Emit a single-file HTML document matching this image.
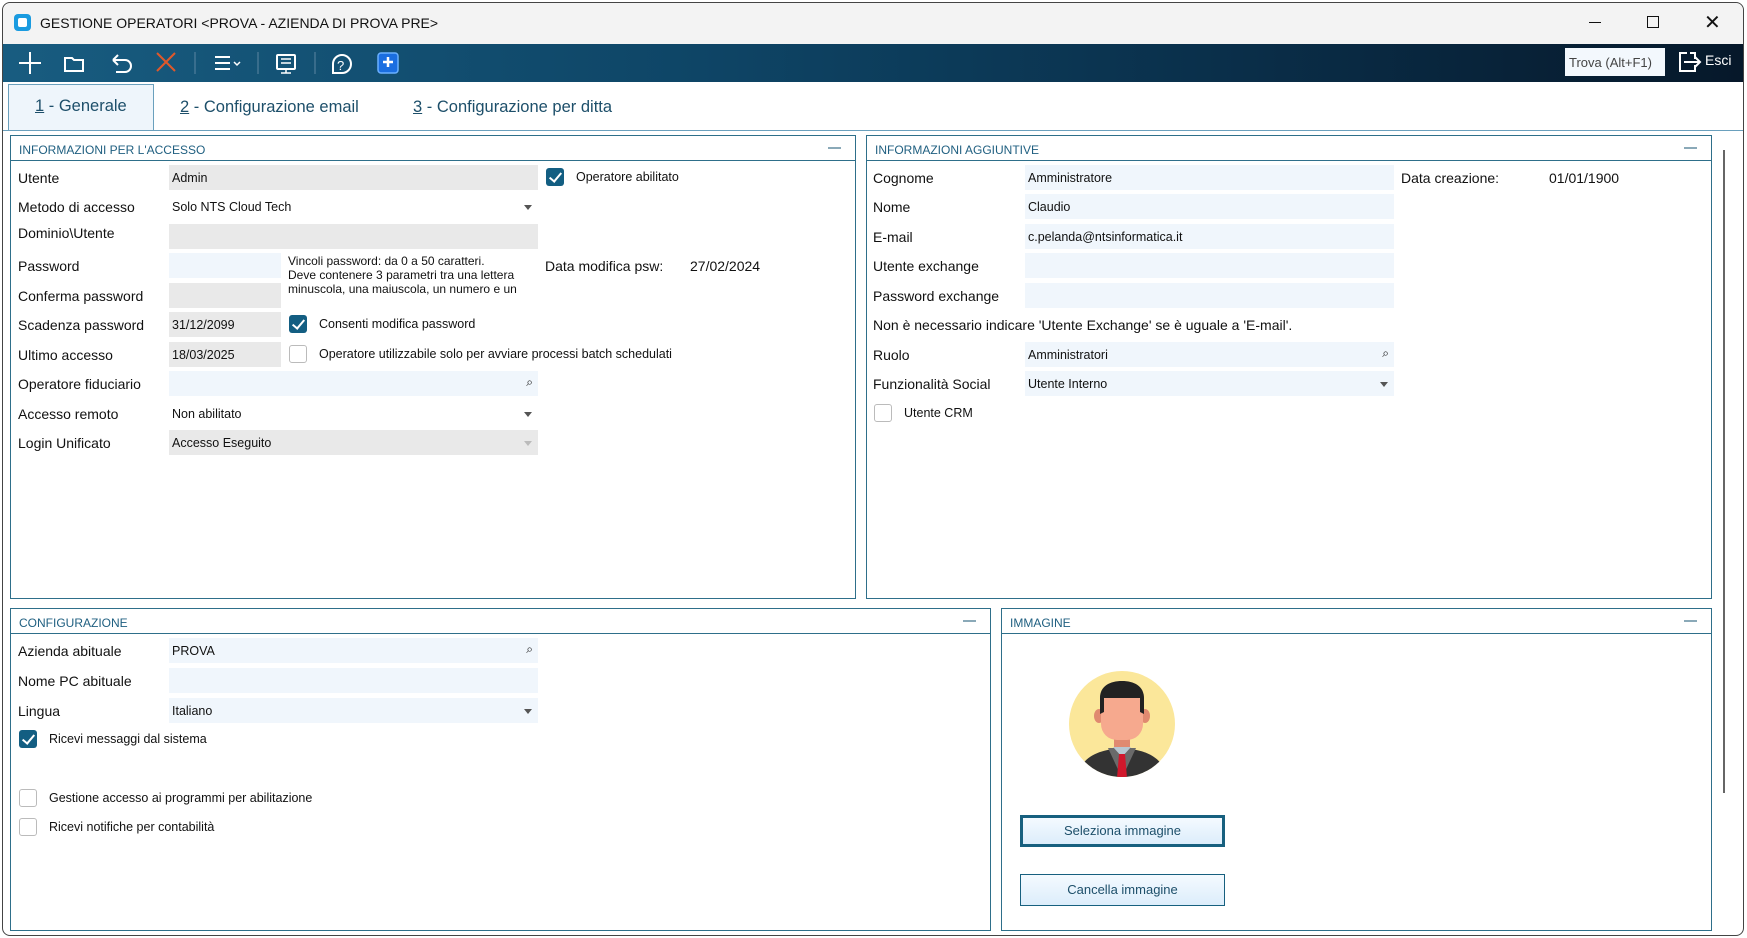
<!DOCTYPE html>
<html><head><meta charset="utf-8"><style>
*{margin:0;padding:0;box-sizing:border-box}
body{width:1747px;height:938px;background:#fff;font-family:"Liberation Sans",sans-serif;position:relative;overflow:hidden;color:#111}
.a{position:absolute;white-space:nowrap}
.lbl{font-size:14px;color:#111}
.in{position:absolute;height:25px;font-size:12.5px;padding:6px 3px;color:#111}
.g{background:#e9e9e9}.b{background:#f0f6fc}
.panel{position:absolute;border:1px solid #2e6f8a}
.ph{position:absolute;left:0;right:0;top:0;height:25px;border-bottom:1px solid #2e6f8a;font-size:12px;color:#1f5f80;padding:7px 8px}
.ph i{position:absolute;right:14px;top:11px;width:13px;height:2px;background:#8aa9b8}
.cb{position:absolute;width:18px;height:18px;border-radius:3px}
.cb.on{background:#135e82}
.cb.on:after{content:"";position:absolute;left:6px;top:2px;width:5px;height:10px;border:solid #fff;border-width:0 2px 2px 0;transform:rotate(40deg)}
.cb.off{border:1px solid #bbb;background:#fff}
.dd:after{content:"";position:absolute;right:6px;top:11px;border:4px solid transparent;border-top:5px solid #555}
.dd.lt:after{border-top-color:#bbb}
.btn{position:absolute;width:205px;height:32px;background:linear-gradient(#f4faff,#dcedfb);border:1px solid #17607f;font-size:13px;color:#1d4f6a;text-align:center;line-height:30px}
</style></head><body>
<div class="a" style="left:2px;top:2px;width:1742px;height:934px;border:1px solid #444;border-radius:8px"></div>
<div class="a" style="left:3px;top:3px;width:1740px;height:42px;background:#f3f3f3;border-radius:8px 8px 0 0"></div>
<div class="a" style="left:14px;top:14px;width:17px;height:17px;background:#1a9be0;border-radius:4px"><div style="position:absolute;left:4px;top:4px;width:9px;height:9px;background:#fff;border-radius:2px"></div></div>
<div class="a" style="left:40px;top:15px;font-size:14px;color:#111">GESTIONE OPERATORI &lt;PROVA - AZIENDA DI PROVA PRE&gt;</div>
<div class="a" style="left:1589px;top:22px;width:12px;height:1px;background:#111"></div>
<div class="a" style="left:1647px;top:16px;width:12px;height:12px;border:1px solid #111"></div>
<div class="a" style="left:1704px;top:10px;font-size:20px;color:#111">✕</div>
<div class="a" style="left:3px;top:44px;width:1740px;height:38px;background:linear-gradient(90deg,#185c80,#0e4566 40%,#0a2f4a 70%,#06182a)"></div>
<svg class="a" style="left:3px;top:44px" width="420" height="38" fill="none" stroke="#fff" stroke-width="2">
<path d="M27 8v22M16 19h22"/>
<path d="M62 14h7l2 2h9v11H62z"/>
<path d="M110 16h12a6 6 0 010 12h-9M110 16l5-5M110 16l5 5"/>
<path d="M154 9l18 18M172 9l-18 18" stroke="#e0582a"/>
<path d="M192 8v22" stroke="#5c87a2" stroke-width="1"/>
<path d="M212 13h15M212 19h15M212 25h15"/><path d="M231 18l3 3 3-3" stroke-width="1.5"/>
<path d="M255 8v22" stroke="#5c87a2" stroke-width="1"/>
<rect x="274" y="11" width="18" height="14" rx="1"/><path d="M278 15h10M278 19h10M283 25v4M278 29h10" stroke-width="1.5"/>
<path d="M312 8v22" stroke="#5c87a2" stroke-width="1"/>
<path d="M330 29v-9a9 9 0 1118 0 9 9 0 01-9 9z"/><text x="334" y="26" fill="#fff" stroke="none" font-size="13" font-family="Liberation Sans">?</text>
<rect x="375" y="9" width="20" height="20" rx="3" fill="#1a6ee0" stroke="#6ab0ff" stroke-width="1.5"/><path d="M385 13v10M380 18h10" stroke-width="2.5"/>
</svg>
<div class="a" style="left:1565px;top:48px;width:100px;height:28px;background:#f3f8fd;font-size:13px;color:#444;padding:7px 4px">Trova (Alt+F1)</div>
<svg class="a" style="left:1677px;top:48px" width="26" height="28" fill="none" stroke="#fff" stroke-width="2"><path d="M10 5H3v18h15v-6M18 11V5h-5"/><path d="M7 14h16M18 9l5 5-5 5"/></svg>
<div class="a" style="left:1705px;top:52px;font-size:14px;color:#fff">Esci</div>
<div class="a" style="left:8px;top:84px;width:146px;height:47px;background:#eef5fb;border:1px solid #6aa0bd;border-bottom:none"></div>
<div class="a" style="left:35px;top:97px;font-size:16.5px;color:#1d4f6a"><u>1</u> - Generale</div>
<div class="a" style="left:180px;top:98px;font-size:16.5px;color:#1d4f6a"><u>2</u> - Configurazione email</div>
<div class="a" style="left:413px;top:98px;font-size:16.5px;color:#1d4f6a"><u>3</u> - Configurazione per ditta</div>
<div class="a" style="left:3px;top:130px;width:1740px;height:1px;background:#6aa0bd"></div>
<div class="a" style="left:1723px;top:150px;width:2px;height:643px;background:#666"></div>

<div class="panel" style="left:10px;top:135px;width:846px;height:464px"><div class="ph">INFORMAZIONI PER L'ACCESSO<i></i></div></div>
<div class="a lbl" style="left:18px;top:170px">Utente</div><div class="in g" style="left:169px;top:165px;width:369px">Admin</div>
<div class="cb on" style="left:546px;top:168px"></div><div class="a" style="left:576px;top:170px;font-size:12.5px">Operatore abilitato</div>
<div class="a lbl" style="left:18px;top:199px">Metodo di accesso</div><div class="in b dd" style="left:169px;top:194px;width:369px;background:#fff">Solo NTS Cloud Tech</div>
<div class="a lbl" style="left:18px;top:225px">Dominio\Utente</div><div class="in g" style="left:169px;top:224px;width:369px"></div>
<div class="a lbl" style="left:18px;top:258px">Password</div><div class="in b" style="left:169px;top:253px;width:112px"></div>
<div class="a" style="left:288px;top:254px;font-size:12px;line-height:14px">Vincoli password: da 0 a 50 caratteri.<br>Deve contenere 3 parametri tra una lettera<br>minuscola, una maiuscola, un numero e un</div>
<div class="a lbl" style="left:545px;top:258px">Data modifica psw:</div><div class="a lbl" style="left:690px;top:258px">27/02/2024</div>
<div class="a lbl" style="left:18px;top:288px">Conferma password</div><div class="in g" style="left:169px;top:283px;width:112px"></div>
<div class="a lbl" style="left:18px;top:317px">Scadenza password</div><div class="in g" style="left:169px;top:312px;width:112px">31/12/2099</div>
<div class="cb on" style="left:289px;top:315px"></div><div class="a" style="left:319px;top:317px;font-size:12.5px">Consenti modifica password</div>
<div class="a lbl" style="left:18px;top:347px">Ultimo accesso</div><div class="in g" style="left:169px;top:342px;width:112px">18/03/2025</div>
<div class="cb off" style="left:289px;top:345px"></div><div class="a" style="left:319px;top:347px;font-size:12.5px">Operatore utilizzabile solo per avviare processi batch schedulati</div>
<div class="a lbl" style="left:18px;top:376px">Operatore fiduciario</div><div class="in b" style="left:169px;top:371px;width:369px"><span style="position:absolute;right:5px;top:4px;font-size:12px">⌕</span></div>
<div class="a lbl" style="left:18px;top:406px">Accesso remoto</div><div class="in dd" style="left:169px;top:401px;width:369px">Non abilitato</div>
<div class="a lbl" style="left:18px;top:435px">Login Unificato</div><div class="in g dd lt" style="left:169px;top:430px;width:369px">Accesso Eseguito</div>

<div class="panel" style="left:866px;top:135px;width:846px;height:464px"><div class="ph">INFORMAZIONI AGGIUNTIVE<i></i></div></div>
<div class="a lbl" style="left:873px;top:170px">Cognome</div><div class="in b" style="left:1025px;top:165px;width:369px">Amministratore</div>
<div class="a lbl" style="left:1401px;top:170px">Data creazione:</div><div class="a lbl" style="left:1549px;top:170px">01/01/1900</div>
<div class="a lbl" style="left:873px;top:199px">Nome</div><div class="in b" style="left:1025px;top:194px;width:369px">Claudio</div>
<div class="a lbl" style="left:873px;top:229px">E-mail</div><div class="in b" style="left:1025px;top:224px;width:369px">c.pelanda@ntsinformatica.it</div>
<div class="a lbl" style="left:873px;top:258px">Utente exchange</div><div class="in b" style="left:1025px;top:253px;width:369px"></div>
<div class="a lbl" style="left:873px;top:288px">Password exchange</div><div class="in b" style="left:1025px;top:283px;width:369px"></div>
<div class="a lbl" style="left:873px;top:317px">Non è necessario indicare 'Utente Exchange' se è uguale a 'E-mail'.</div>
<div class="a lbl" style="left:873px;top:347px">Ruolo</div><div class="in b" style="left:1025px;top:342px;width:369px">Amministratori<span style="position:absolute;right:5px;top:4px;font-size:12px">⌕</span></div>
<div class="a lbl" style="left:873px;top:376px">Funzionalità Social</div><div class="in b dd" style="left:1025px;top:371px;width:369px">Utente Interno</div>
<div class="cb off" style="left:874px;top:404px"></div><div class="a" style="left:904px;top:406px;font-size:12.5px">Utente CRM</div>

<div class="panel" style="left:10px;top:608px;width:981px;height:323px"><div class="ph">CONFIGURAZIONE<i></i></div></div>
<div class="a lbl" style="left:18px;top:643px">Azienda abituale</div><div class="in b" style="left:169px;top:638px;width:369px">PROVA<span style="position:absolute;right:5px;top:4px;font-size:12px">⌕</span></div>
<div class="a lbl" style="left:18px;top:673px">Nome PC abituale</div><div class="in b" style="left:169px;top:668px;width:369px"></div>
<div class="a lbl" style="left:18px;top:703px">Lingua</div><div class="in b dd" style="left:169px;top:698px;width:369px">Italiano</div>
<div class="cb on" style="left:19px;top:730px"></div><div class="a" style="left:49px;top:732px;font-size:12.5px">Ricevi messaggi dal sistema</div>
<div class="cb off" style="left:19px;top:789px"></div><div class="a" style="left:49px;top:791px;font-size:12.5px">Gestione accesso ai programmi per abilitazione</div>
<div class="cb off" style="left:19px;top:818px"></div><div class="a" style="left:49px;top:820px;font-size:12.5px">Ricevi notifiche per contabilità</div>

<div class="panel" style="left:1001px;top:608px;width:711px;height:323px"><div class="ph">IMMAGINE<i></i></div></div>
<svg class="a" style="left:1068px;top:670px" width="108" height="108" viewBox="0 0 108 108">
<defs><clipPath id="c"><circle cx="54" cy="54" r="53"/></clipPath></defs>
<circle cx="54" cy="54" r="53" fill="#fbe79a"/>
<g clip-path="url(#c)">
<path d="M8 108c6-22 22-28 46-30 24 2 40 8 46 30z" fill="#333"/>
<path d="M40 78l14 30 14-30z" fill="#6a6a6a"/>
<path d="M45 77l9 10 9-10z" fill="#b8c7d0"/>
<path d="M51 84h6l2 24h-10z" fill="#d0182c"/>
<rect x="46" y="62" width="16" height="15" fill="#e08a70"/>
<ellipse cx="31" cy="46" rx="5" ry="7" fill="#e08a70"/><ellipse cx="77" cy="46" rx="5" ry="7" fill="#e08a70"/>
<rect x="33" y="22" width="42" height="48" rx="16" fill="#f6a98e"/>
<path d="M32 44V28c0-12 10-17 22-17s22 5 22 17v16l-4-2V28H36v14z" fill="#222"/>
</g></svg>
<div class="btn" style="left:1020px;top:815px;border:3px solid #17607f;line-height:26px">Seleziona immagine</div>
<div class="btn" style="left:1020px;top:874px">Cancella immagine</div>
</body></html>
